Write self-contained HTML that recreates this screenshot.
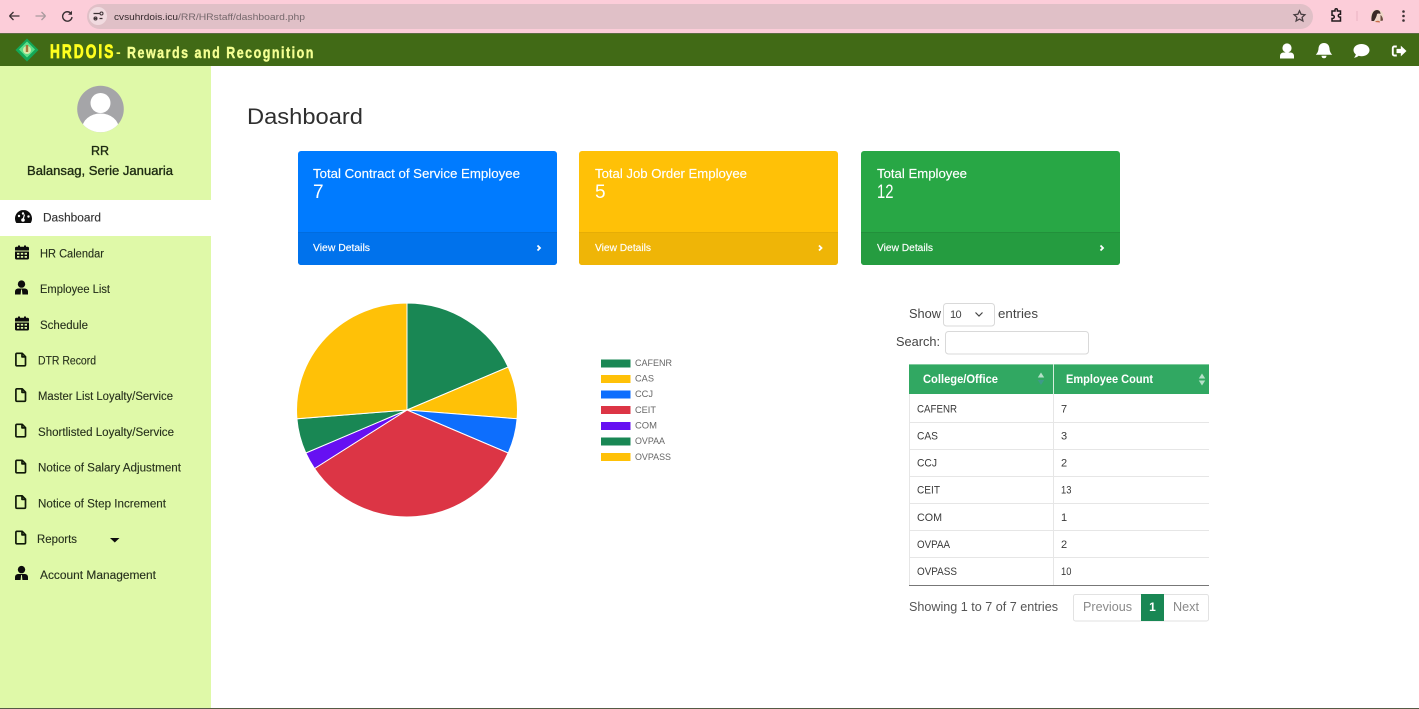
<!DOCTYPE html>
<html lang="en"><head><meta charset="utf-8"><title>Dashboard</title>
<style>
html,body{margin:0;padding:0;background:#fff;overflow:hidden;width:1419px;height:709px}
svg{display:block}
text{font-family:"Liberation Sans",Arial,sans-serif}
</style></head>
<body>
<svg width="1419" height="709" viewBox="0 0 1419 709" xmlns="http://www.w3.org/2000/svg">
<defs>
<g id="cal"><path d="M0 5V2.500C0 1.700.6 1.200 1.400 1.200H3V0h2v1.200h4V0h2v1.200h1.600c.8 0 1.400.5 1.400 1.300V5zM0 6h14v6.600c0 .8-.6 1.400-1.400 1.400H1.400C.6 14 0 13.400 0 12.600z" fill="#0d0d0d"/><path d="M2 7.400h2.400v1.700H2zM5.800 7.400h2.400v1.700H5.800zM9.600 7.400H12v1.700H9.600zM2 10.500h2.400v1.700H2zM5.800 10.500h2.400v1.700H5.800zM9.600 10.500H12v1.700H9.600z" fill="#dff9a8"/></g>
<g id="emp"><circle cx="6.500" cy="3.600" r="3.700" fill="#0d0d0d"/><path d="M0 14v-2.700C0 9 1.500 8 3.500 8h6c2 0 3.500 1 3.500 3.300V14z" fill="#0d0d0d"/><path d="M6.100 9h.8l.5 5H5.600z" fill="#dff9a8"/></g>
<path id="file" d="M1.900.8h5.300l3.300 3.400v8.100c0 .6-.4 1-1 1H1.900c-.6 0-1-.4-1-1V1.800c0-.6.4-1 1-1zM7 1v3.400h3.400" fill="none" stroke="#101a08" stroke-width="1.700" stroke-linejoin="round"/>
</defs>

<!-- browser chrome -->
<rect width="1419" height="33" fill="#fccdd9"/>
<rect x="87" y="4" width="1226" height="25" rx="12.500" fill="#e0c0c7"/>
<path d="M9.500 16h10M9.500 16l4-4M9.500 16l4 4" fill="none" stroke="#3b3134" stroke-width="1.300"/>
<path d="M45.500 16h-10M45.500 16l-4-4M45.500 16l-4 4" fill="none" stroke="#a99a9e" stroke-width="1.300"/>
<path d="M71 13.500A4.700 4.700 0 1 0 72 17" fill="none" stroke="#3b3134" stroke-width="1.400"/><path d="M72 10.800v4h-4z" fill="#3b3134"/>
<circle cx="98" cy="16" r="9" fill="#f1dbe0"/>
<path d="M93.500 13.500h6M93.500 18.500h3M99.500 18.500h3" stroke="#3b3134" stroke-width="1.200"/><circle cx="101.500" cy="13.500" r="1.500" fill="none" stroke="#3b3134"/><circle cx="95.500" cy="18.500" r="1.500" fill="none" stroke="#3b3134"/>
<text x="114" y="20" font-size="9.500" fill="#33292c" textLength="64" lengthAdjust="spacingAndGlyphs">cvsuhrdois.icu</text>
<text x="178" y="20" font-size="9.500" fill="#75686c" textLength="127" lengthAdjust="spacingAndGlyphs">/RR/HRstaff/dashboard.php</text>
<path d="M1299.500 10.800l1.600 3.500 3.800.4-2.800 2.600.8 3.700-3.400-1.900-3.400 1.900.8-3.700-2.800-2.600 3.800-.4z" fill="none" stroke="#4a3f43" stroke-width="1.300"/>
<path d="M1332 11h3v-1a1.200 1.200 0 0 1 2.400 0v1h3.100v3.300h-.8a1.400 1.400 0 0 0 0 2.800h.8v3.900H1332v-2.500h.7a1.600 1.600 0 0 0 0-3.200h-.7z" fill="none" stroke="#221b1d" stroke-width="1.500"/>
<rect x="1356.500" y="11" width="1" height="10" fill="#eab4c2"/>
<circle cx="1377" cy="16" r="6.500" fill="#eed6c8"/><path d="M1371.500 21c-.5-6 1.500-11 5.500-11 2.500 0 3.500 2 3.500 4-1.500-.7-2.500-.7-3.500 0-.3 2.500-2 5.500-3 7z" fill="#3a2a26"/><path d="M1380.500 15c1.500 1 2.500 3 2.500 5.500l-2.500.5z" fill="#6a4a40"/><path d="M1375 22c1-1.500 3-1.500 4.500-1l.5 1.500z" fill="#c86a4a"/>
<circle cx="1403.500" cy="11.500" r="1.300" fill="#3b3134"/><circle cx="1403.500" cy="16" r="1.300" fill="#3b3134"/><circle cx="1403.500" cy="20.500" r="1.300" fill="#3b3134"/>

<!-- top nav -->
<rect y="33" width="1419" height="33" fill="#416a16"/>
<rect y="33" width="1419" height="1" fill="#5c6b44"/>
<path d="M27 38.500L38.500 50 27 61.500 15.500 50z" fill="#14a858"/>
<path d="M27 41.500L35 49.500 27 57.500 19 49.500z" fill="#5fe08a"/>
<circle cx="27" cy="50" r="4" fill="#d8e8a8"/><rect x="25.800" y="45" width="2.400" height="7" fill="#a8763a"/>
<text transform="translate(50 58) scale(.72 1)" font-size="19" font-weight="700" fill="#ffff1f" stroke="#ffff1f" stroke-width=".8" textLength="88" lengthAdjust="spacing">HRDOIS</text>
<text x="116" y="57" font-size="14" font-weight="700" fill="#f6ff55">-</text>
<text transform="translate(127 58) scale(.78 1)" font-size="16" font-weight="700" fill="#f4ff92" stroke="#f4ff92" stroke-width=".4" textLength="239" lengthAdjust="spacing">Rewards and Recognition</text>

<!-- nav icons -->
<circle cx="1287" cy="48" r="4.600" fill="#fff"/><path d="M1280 58.500v-2.300c0-2.300 1.500-3.700 3.500-3.700h7c2 0 3.500 1.400 3.500 3.700v2.300z" fill="#fff"/>
<path d="M1324 43c3.700 0 5.300 2.700 5.500 5.500.2 3 1.200 4.700 2.700 6.200h-16.400c1.500-1.500 2.500-3.200 2.700-6.200.2-2.800 1.800-5.500 5.500-5.500z" fill="#fff"/><path d="M1321.500 55.800h5a2.500 2.500 0 0 1-5 0z" fill="#fff"/>
<path d="M1361.500 44c4.500 0 8 2.700 8 6.100s-3.500 6.100-8 6.100c-1 0-1.900-.1-2.800-.4-1.200 1-2.800 1.900-4.800 1.900 1-.9 1.700-2.100 1.900-3.300-1.400-1.100-2.300-2.600-2.300-4.300 0-3.400 3.500-6.100 8-6.100z" fill="#fff"/>
<path d="M1396.800 46.500h-2.500a1.500 1.500 0 0 0-1.500 1.500v6a1.500 1.500 0 0 0 1.500 1.500h2.500" fill="none" stroke="#fff" stroke-width="1.900"/>
<path d="M1400.800 45.600l5.700 5.400-5.700 5.400v-3.300h-4.300v-4.200h4.300z" fill="#fff"/>

<!-- sidebar -->
<rect y="66" width="211" height="643" fill="#dff9a8"/>
<circle cx="100.500" cy="109" r="23.300" fill="#a5a5a8"/>
<clipPath id="av"><circle cx="100.500" cy="109" r="23.300"/></clipPath>
<g clip-path="url(#av)" fill="#fff"><circle cx="100.500" cy="103" r="10"/><ellipse cx="100.500" cy="129" rx="18.500" ry="15.500"/></g>
<text x="100" y="155" font-size="12.500" text-anchor="middle" fill="#1e2b12" stroke="#1e2b12" stroke-width=".35">RR</text>
<text x="27" y="175" font-size="13" fill="#1e2b12" stroke="#1e2b12" stroke-width=".35" textLength="146" lengthAdjust="spacingAndGlyphs">Balansag, Serie Januaria</text>
<rect y="200" width="211" height="36" fill="#fff"/>
<path d="M23.500 210c-4.700 0-8.500 3.800-8.500 8.500 0 1.800.5 3.400 1.400 4.500h14.200c.9-1.100 1.400-2.700 1.400-4.500 0-4.700-3.800-8.500-8.500-8.500z" fill="#0d0d0d"/>
<circle cx="19" cy="216" r="1.200" fill="#fff"/><circle cx="23" cy="213.500" r="1.200" fill="#fff"/><circle cx="28.500" cy="216.500" r="1.200" fill="#fff"/><path d="M24.500 214.500l-1.300 4.500" stroke="#fff" stroke-width="1.200"/><circle cx="23" cy="220" r="1.800" fill="#fff"/>
<use href="#cal" x="15" y="245.500"/>
<use href="#emp" x="15" y="280.500"/>
<use href="#cal" x="15" y="316.500"/>
<use href="#file" x="15" y="352.500"/>
<use href="#file" x="15" y="388"/>
<use href="#file" x="15" y="423.500"/>
<use href="#file" x="15" y="459.500"/>
<use href="#file" x="15" y="495"/>
<use href="#file" x="15" y="530.500"/>
<use href="#emp" x="15" y="566"/>
<g font-size="11.500" fill="#26301c" stroke="#26301c" stroke-width=".12">
<text x="43" y="221.500" textLength="58" lengthAdjust="spacingAndGlyphs" fill="#333" stroke="#333">Dashboard</text>
<text x="40" y="257.500" textLength="64" lengthAdjust="spacingAndGlyphs">HR Calendar</text>
<text x="40" y="293" textLength="70" lengthAdjust="spacingAndGlyphs">Employee List</text>
<text x="40" y="329" textLength="48" lengthAdjust="spacingAndGlyphs">Schedule</text>
<text x="38" y="364.500" textLength="58" lengthAdjust="spacingAndGlyphs">DTR Record</text>
<text x="38" y="400" textLength="135" lengthAdjust="spacingAndGlyphs">Master List Loyalty/Service</text>
<text x="38" y="436" textLength="136" lengthAdjust="spacingAndGlyphs">Shortlisted Loyalty/Service</text>
<text x="38" y="471.500" textLength="143" lengthAdjust="spacingAndGlyphs">Notice of Salary Adjustment</text>
<text x="38" y="507.500" textLength="128" lengthAdjust="spacingAndGlyphs">Notice of Step Increment</text>
<text x="37" y="543" textLength="40" lengthAdjust="spacingAndGlyphs">Reports</text>
<text x="40" y="579" textLength="116" lengthAdjust="spacingAndGlyphs">Account Management</text>
</g>
<path d="M110 538h9.500l-4.700 4.500z" fill="#0d0d0d"/>

<!-- title -->
<text x="247" y="124" font-size="22" fill="#2f2f2f" textLength="116" lengthAdjust="spacingAndGlyphs">Dashboard</text>

<!-- cards -->
<rect x="298" y="151" width="259" height="114" rx="3" fill="#007bff"/>
<path d="M298 232h259v30a3 3 0 0 1-3 3H301a3 3 0 0 1-3-3z" fill="#0072ec"/><rect x="298" y="232" width="259" height="1" fill="#006cdf"/>
<rect x="579" y="151" width="259" height="114" rx="3" fill="#ffc107"/>
<path d="M579 232h259v30a3 3 0 0 1-3 3H582a3 3 0 0 1-3-3z" fill="#efb507"/><rect x="579" y="232" width="259" height="1" fill="#e6ad06"/>
<rect x="861" y="151" width="259" height="114" rx="3" fill="#28a745"/>
<path d="M861 232h259v30a3 3 0 0 1-3 3H864a3 3 0 0 1-3-3z" fill="#259c40"/><rect x="861" y="232" width="259" height="1" fill="#22903b"/>
<g fill="#fff">
<g stroke="#fff" stroke-width=".15">
<text x="313" y="178" font-size="13" textLength="207" lengthAdjust="spacingAndGlyphs">Total Contract of Service Employee</text>
<text x="313" y="251" font-size="10" textLength="57" lengthAdjust="spacingAndGlyphs">View Details</text>
<text x="595" y="178" font-size="13" textLength="152" lengthAdjust="spacingAndGlyphs">Total Job Order Employee</text>
<text x="595" y="251" font-size="10" textLength="56" lengthAdjust="spacingAndGlyphs">View Details</text>
<text x="877" y="178" font-size="13" textLength="90" lengthAdjust="spacingAndGlyphs">Total Employee</text>
<text x="877" y="251" font-size="10" textLength="56" lengthAdjust="spacingAndGlyphs">View Details</text>
</g>
<text x="313" y="198" font-size="19">7</text>
<text x="595" y="198" font-size="19">5</text>
<text transform="translate(877 198) scale(.78 1)" font-size="19">12</text>
</g>
<g fill="none" stroke="#fff" stroke-width="1.800"><path d="M537.500 245.500l2.500 2.500-2.500 2.500"/><path d="M819 245.500l2.500 2.500-2.500 2.500"/><path d="M1100.500 245.500l2.500 2.500-2.500 2.500"/></g>

<!-- pie -->
<g stroke="#fff" stroke-width="1">
<path d="M407 410V303A110.500 107 0 0 1 508.200 367z" fill="#198754"/>
<path d="M407 410L508.200 367A110.500 107 0 0 1 517.100 418.800z" fill="#ffc107"/>
<path d="M407 410L517.100 418.800A110.500 107 0 0 1 508.200 453z" fill="#0d6efd"/>
<path d="M407 410L508.200 453A110.500 107 0 0 1 314.500 468.500z" fill="#dc3545"/>
<path d="M407 410L314.500 468.500A110.500 107 0 0 1 305.800 453z" fill="#6610f2"/>
<path d="M407 410L305.800 453A110.500 107 0 0 1 296.900 418.800z" fill="#198754"/>
<path d="M407 410L296.900 418.800A110.500 107 0 0 1 407 303z" fill="#ffc107"/>
</g>
<!-- legend -->
<rect x="601" y="359.500" width="29.500" height="8" fill="#198754"/>
<rect x="601" y="375" width="29.500" height="8" fill="#ffc107"/>
<rect x="601" y="390.500" width="29.500" height="8" fill="#0d6efd"/>
<rect x="601" y="406" width="29.500" height="8" fill="#dc3545"/>
<rect x="601" y="422" width="29.500" height="8" fill="#6610f2"/>
<rect x="601" y="437.500" width="29.500" height="8" fill="#198754"/>
<rect x="601" y="453" width="29.500" height="8" fill="#ffc107"/>
<g font-size="9" fill="#666">
<text x="635" y="366" textLength="37" lengthAdjust="spacingAndGlyphs">CAFENR</text>
<text x="635" y="381.500" textLength="19" lengthAdjust="spacingAndGlyphs">CAS</text>
<text x="635" y="397" textLength="18" lengthAdjust="spacingAndGlyphs">CCJ</text>
<text x="635" y="413" textLength="21" lengthAdjust="spacingAndGlyphs">CEIT</text>
<text x="635" y="428.500" textLength="22" lengthAdjust="spacingAndGlyphs">COM</text>
<text x="635" y="444" textLength="30" lengthAdjust="spacingAndGlyphs">OVPAA</text>
<text x="635" y="460" textLength="36" lengthAdjust="spacingAndGlyphs">OVPASS</text>
</g>

<!-- datatable controls -->
<g font-size="12.500" fill="#444">
<text x="909" y="318" textLength="32" lengthAdjust="spacingAndGlyphs">Show</text>
<text x="998" y="318" textLength="40" lengthAdjust="spacingAndGlyphs">entries</text>
<text x="896" y="346" textLength="44" lengthAdjust="spacingAndGlyphs">Search:</text>
</g>
<rect x="943.500" y="303.500" width="51" height="22.500" rx="3" fill="#fff" stroke="#d9d9d9"/>
<text x="950" y="318" font-size="11" fill="#444" letter-spacing="-.6">10</text>
<path d="M975.500 312.500l3.500 3.500 3.500-3.500" fill="none" stroke="#444" stroke-width="1.200"/>
<rect x="945.500" y="331.500" width="143" height="22.500" rx="3" fill="#fff" stroke="#d9d9d9"/>

<!-- table -->
<rect x="909" y="364" width="300" height="30" fill="#31a862"/>
<rect x="909" y="364" width="300" height="1" fill="#7fcb9d"/>
<rect x="1053" y="364" width="1" height="30" fill="#d5eedd"/>
<text x="923" y="383" font-size="11.500" font-weight="700" fill="#fff" textLength="75" lengthAdjust="spacingAndGlyphs">College/Office</text>
<text x="1066" y="383" font-size="11.500" font-weight="700" fill="#fff" textLength="87" lengthAdjust="spacingAndGlyphs">Employee Count</text>
<path d="M1041 372.500l3.200 5h-6.400z" fill="#b5e0c8"/><path d="M1041 385l3.200-5h-6.400z" fill="#3f9a8a"/>
<path d="M1202 373.500l3.200 5h-6.400z" fill="#b5e0c8"/><path d="M1202 385.500l3.200-5h-6.400z" fill="#b5e0c8"/>
<g fill="#e6e6e6">
<rect x="909" y="422" width="300" height="1"/><rect x="909" y="449" width="300" height="1"/><rect x="909" y="476" width="300" height="1"/><rect x="909" y="503" width="300" height="1"/><rect x="909" y="530" width="300" height="1"/><rect x="909" y="557" width="300" height="1"/>
<rect x="909" y="394" width="1" height="191"/><rect x="1053" y="394" width="1" height="191"/>
</g>
<rect x="909" y="585" width="300" height="1" fill="#777"/>
<g font-size="11" fill="#3a3a3a">
<text x="917" y="412.500" textLength="40" lengthAdjust="spacingAndGlyphs">CAFENR</text><text x="1061" y="412.500">7</text>
<text x="917" y="439.500" textLength="21" lengthAdjust="spacingAndGlyphs">CAS</text><text x="1061" y="439.500">3</text>
<text x="917" y="466.500" textLength="20" lengthAdjust="spacingAndGlyphs">CCJ</text><text x="1061" y="466.500">2</text>
<text x="917" y="493.500" textLength="23" lengthAdjust="spacingAndGlyphs">CEIT</text><text transform="translate(1061 493.500) scale(.85 1)">13</text>
<text x="917" y="521" textLength="25" lengthAdjust="spacingAndGlyphs">COM</text><text x="1061" y="521">1</text>
<text x="917" y="548" textLength="33" lengthAdjust="spacingAndGlyphs">OVPAA</text><text x="1061" y="548">2</text>
<text x="917" y="575" textLength="40" lengthAdjust="spacingAndGlyphs">OVPASS</text><text transform="translate(1061 575) scale(.85 1)">10</text>
</g>

<!-- footer -->
<text x="909" y="611" font-size="12.500" fill="#555" textLength="149" lengthAdjust="spacingAndGlyphs">Showing 1 to 7 of 7 entries</text>
<rect x="1073.500" y="594.500" width="135" height="26.500" rx="2" fill="#fff" stroke="#e2e2e2"/>
<rect x="1141" y="594" width="23" height="27" fill="#198754"/>
<text x="1083" y="611" font-size="12.500" fill="#8a8a8a" textLength="49" lengthAdjust="spacingAndGlyphs">Previous</text>
<text x="1152.500" y="611" font-size="12" fill="#fff" text-anchor="middle" font-weight="700">1</text>
<text x="1173" y="611" font-size="12.500" fill="#8a8a8a" textLength="26" lengthAdjust="spacingAndGlyphs">Next</text>

<rect y="708" width="1419" height="1" fill="#555b45"/>
</svg>
</body></html>
